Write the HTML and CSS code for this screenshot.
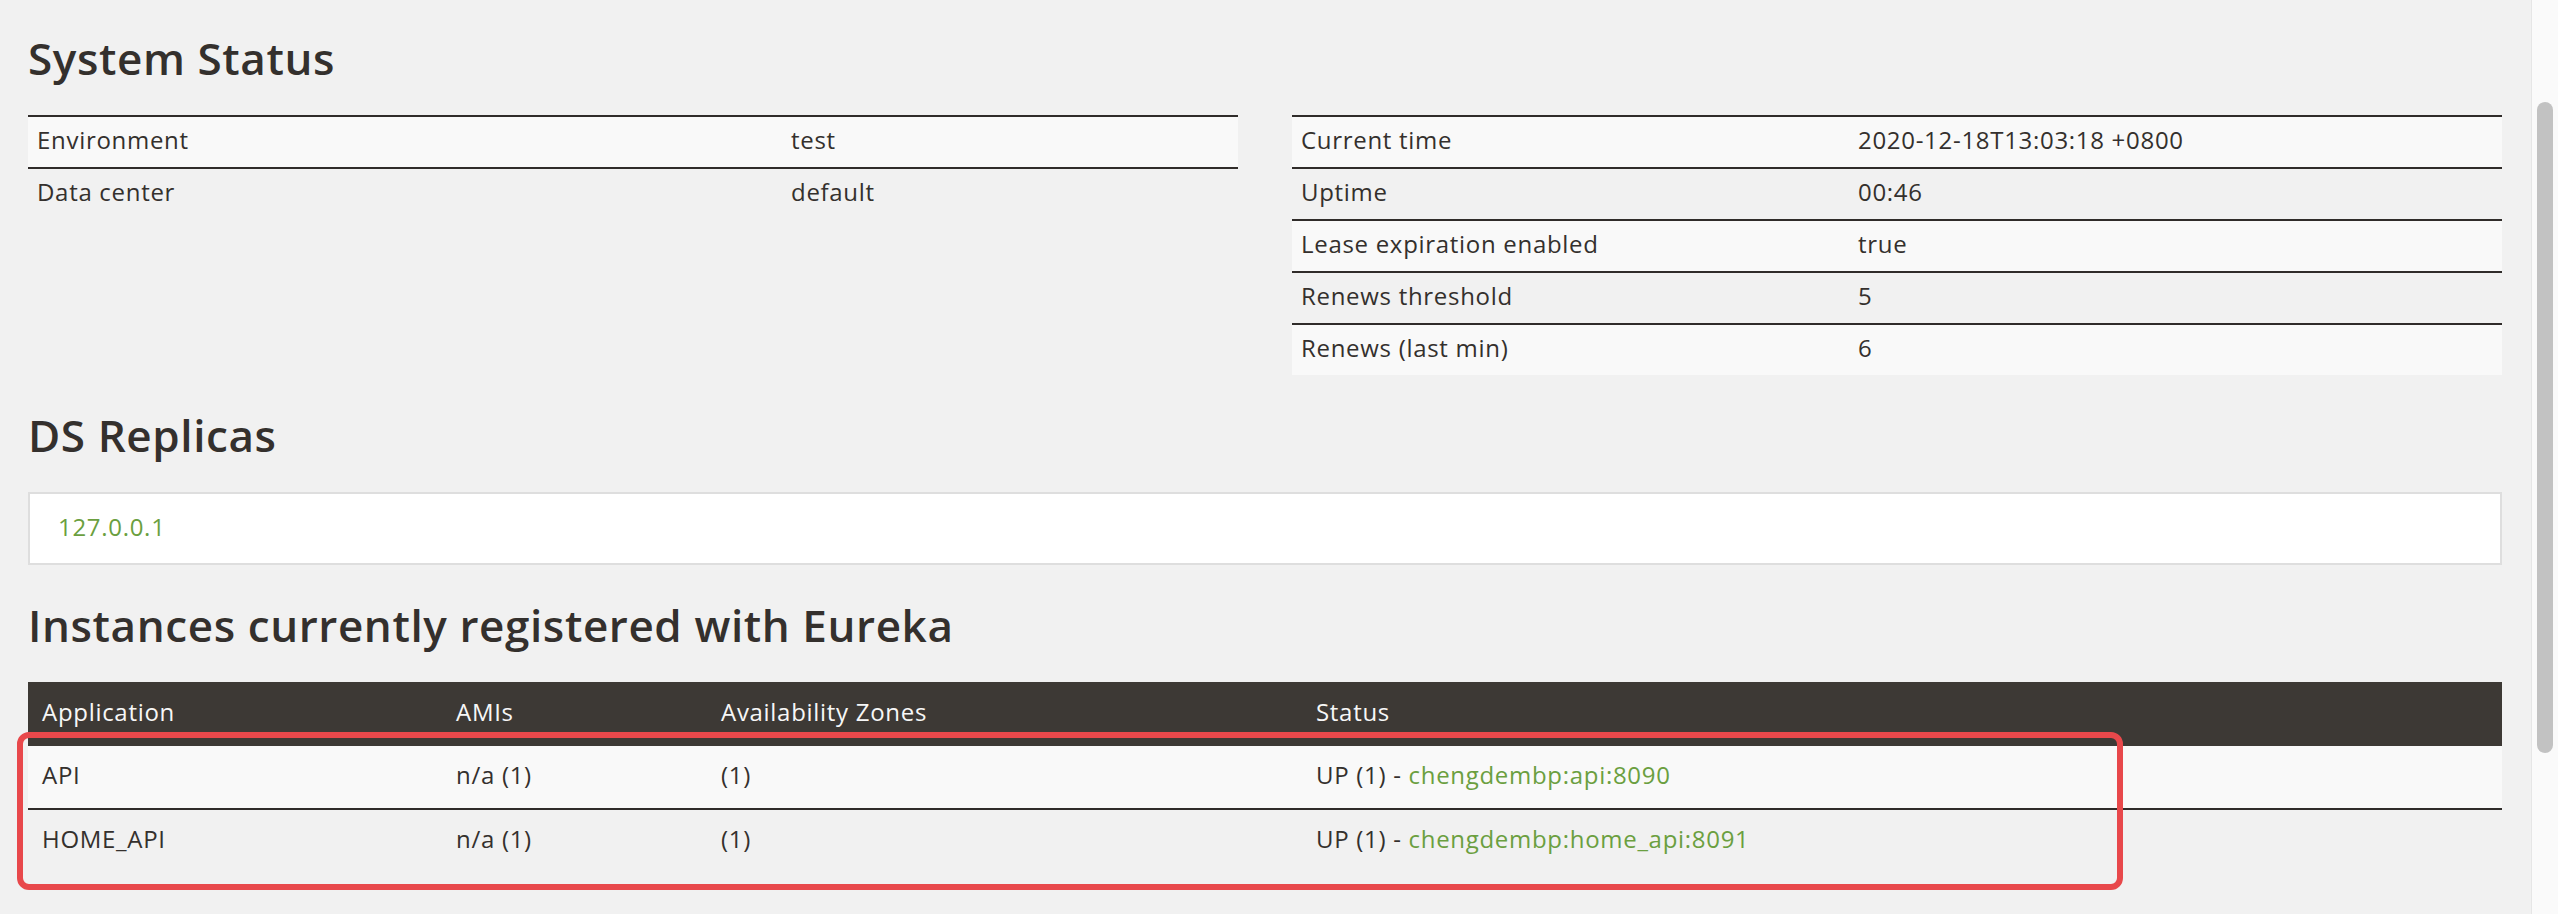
FILE: index.html
```html
<!DOCTYPE html>
<html lang="en">
<head>
<meta charset="utf-8">
<title>Eureka</title>
<link rel="stylesheet" href="styles.css">
</head>
<body>
<div class="window">
  <main class="page">
    <h2 class="heading heading-first">System Status</h2>
    <div class="status-grid">
      <table class="kv kv-left">
        <tbody>
          <tr><td class="k">Environment</td><td>test</td></tr>
          <tr><td class="k">Data center</td><td>default</td></tr>
        </tbody>
      </table>
      <table class="kv kv-right">
        <tbody>
          <tr><td class="k">Current time</td><td>2020-12-18T13:03:18 +0800</td></tr>
          <tr><td class="k">Uptime</td><td>00:46</td></tr>
          <tr><td class="k">Lease expiration enabled</td><td>true</td></tr>
          <tr><td class="k">Renews threshold</td><td>5</td></tr>
          <tr><td class="k">Renews (last min)</td><td>6</td></tr>
        </tbody>
      </table>
    </div>

    <h2 class="heading">DS Replicas</h2>
    <div class="replicas">
      <a class="link" href="#">127.0.0.1</a>
    </div>

    <h2 class="heading">Instances currently registered with Eureka</h2>
    <div class="instances-wrap">
      <table class="instances">
        <thead>
          <tr>
            <th class="c-app">Application</th>
            <th class="c-ami">AMIs</th>
            <th class="c-zone">Availability Zones</th>
            <th class="c-status">Status</th>
          </tr>
        </thead>
        <tbody>
          <tr>
            <td>API</td>
            <td>n/a (1)</td>
            <td>(1)</td>
            <td>UP (1) - <a class="link" href="#">chengdembp:api:8090</a></td>
          </tr>
          <tr>
            <td>HOME_API</td>
            <td>n/a (1)</td>
            <td>(1)</td>
            <td>UP (1) - <a class="link" href="#">chengdembp:home_api:8091</a></td>
          </tr>
        </tbody>
      </table>
      <div class="highlight"></div>
    </div>
  </main>
  <aside class="scrollbar"><div class="thumb"></div></aside>
</div>
</body>
</html>
```

FILE: styles.css
```css
html, body {
  margin: 0;
  padding: 0;
}

body {
  background: #f1f1f1;
  color: #34302d;
  font-family: "Open Sans", "Noto Sans", sans-serif;
  font-size: 24px;
  letter-spacing: 0.7px;
}

.window {
  display: flex;
  height: 914px;
  overflow: hidden;
}

.page {
  flex: 1;
  padding: 0 29px 0 28px;
  min-width: 0;
}

.heading {
  margin: 34px 0 31px 0;
  font-size: 44px;
  line-height: 52px;
  font-weight: 600;
  letter-spacing: 0.6px;
  color: #34302d;
}

.heading-first {
  margin-top: 32px;
}

.status-grid {
  display: grid;
  grid-template-columns: 1fr 1fr;
  column-gap: 54px;
  align-items: start;
}

.kv {
  width: 100%;
  border-collapse: collapse;
  table-layout: fixed;
}

.kv td {
  border-top: 2px solid #302c2a;
  padding: 0 9px 4px 9px;
  line-height: 46px;
  white-space: nowrap;
}

.kv tr:nth-child(odd) td {
  background: #f9f9f9;
}

.kv-left .k {
  width: 736px;
}

.kv-right .k {
  width: 539px;
}

.replicas {
  background: #ffffff;
  border: 2px solid #dedede;
  padding: 0 28px 4px 28px;
  line-height: 65px;
}

.link {
  color: #6b9f40;
  text-decoration: none;
}

.instances-wrap {
  position: relative;
}

.instances {
  width: 100%;
  border-collapse: collapse;
  table-layout: fixed;
}

.instances th {
  background: #3d3935;
  color: #f7f7f7;
  font-weight: 400;
  text-align: left;
  padding: 0 14px 4px 14px;
  line-height: 60px;
}

.instances td {
  padding: 0 14px 4px 14px;
  line-height: 58px;
  white-space: nowrap;
}

.instances tbody tr:nth-child(odd) td {
  background: #f9f9f9;
}

.instances tbody tr + tr td {
  border-top: 2px solid #302c2a;
}

.c-app { width: 386px; }
.c-ami { width: 237px; }
.c-zone { width: 567px; }

.highlight {
  position: absolute;
  left: -11px;
  top: 50px;
  width: 2094px;
  height: 146px;
  border: 6px solid #e8484b;
  border-radius: 12px;
  pointer-events: none;
}

.scrollbar {
  width: 26px;
  border-left: 1px solid #e6e6e6;
  background: #fafafa;
  display: flex;
  justify-content: center;
  padding-top: 102px;
  box-sizing: content-box;
}

.thumb {
  width: 16px;
  height: 651px;
  border-radius: 8px;
  background: #c2c2c2;
}
```
